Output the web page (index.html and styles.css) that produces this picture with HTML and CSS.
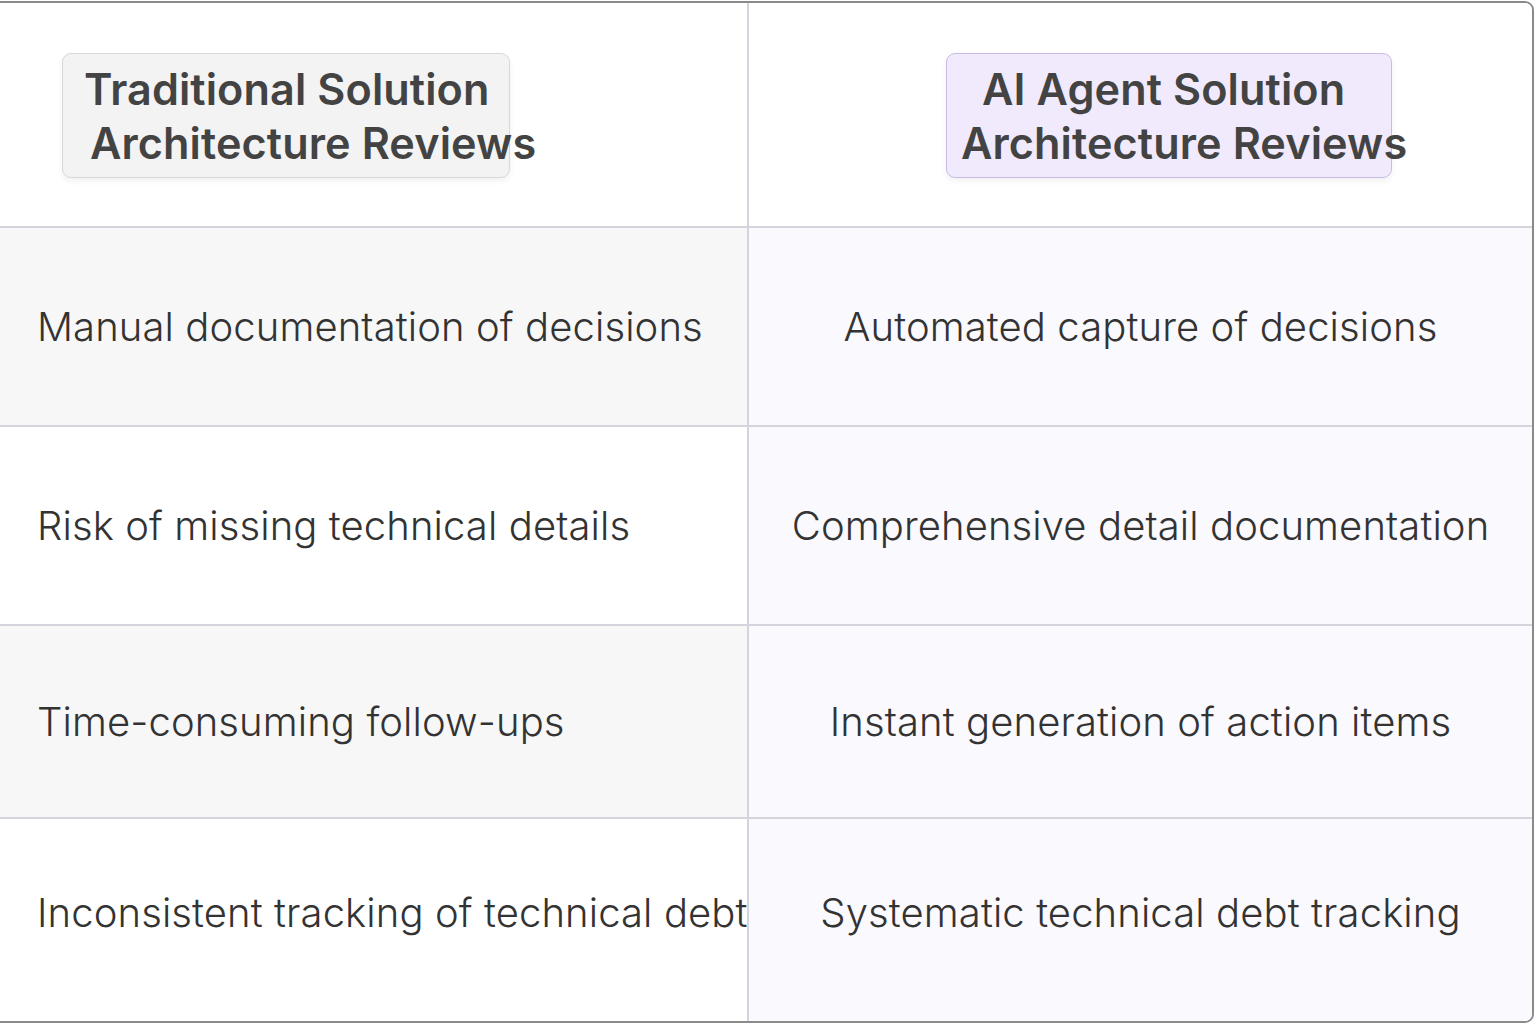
FILE: index.html
```html
<!DOCTYPE html>
<html>
<head>
<meta charset="utf-8">
<link rel="stylesheet" href="styles.css">
</head>
<body>
<div class="frame">
  <div class="row row-head">
    <div class="cell cell-left cell-head">
      <div class="badge badge-trad">
        <span class="line trad-1">Traditional Solution</span>
        <span class="line trad-2">Architecture Reviews</span>
      </div>
    </div>
    <div class="cell cell-right cell-head">
      <div class="badge badge-ai">
        <span class="line ai-1">AI Agent Solution</span>
        <span class="line ai-2">Architecture Reviews</span>
      </div>
    </div>
  </div>
  <div class="row row-1">
    <div class="cell cell-left shade">Manual documentation of decisions</div>
    <div class="cell cell-right">Automated capture of decisions</div>
  </div>
  <div class="row row-2">
    <div class="cell cell-left">Risk of missing technical details</div>
    <div class="cell cell-right">Comprehensive detail documentation</div>
  </div>
  <div class="row row-3">
    <div class="cell cell-left shade">Time-consuming follow-ups</div>
    <div class="cell cell-right">Instant generation of action items</div>
  </div>
  <div class="row row-4">
    <div class="cell cell-left">Inconsistent tracking of technical debt</div>
    <div class="cell cell-right">Systematic technical debt tracking</div>
  </div>
</div>
</body>
</html>
```

FILE: styles.css
```css
html, body {
  margin: 0;
  padding: 0;
  background: #ffffff;
  overflow: hidden;
}

body {
  font-family: Inter, "Noto Sans", "Liberation Sans", sans-serif;
  color: #333333;
}

.frame {
  margin-top: 1px;
  margin-left: -12px;
  width: 1546px;
  box-sizing: border-box;
  border: 2px solid #8a8a8a;
  border-radius: 9px;
  overflow: hidden;
  display: flex;
  flex-direction: column;
}

.row {
  display: grid;
  grid-template-columns: 759px 1fr;
  border-bottom: 2px solid #d4d4dc;
}

.row-4 { border-bottom: none; }

.row-head { height: 223px; }
.row-1 { height: 197px; }
.row-2 { height: 197px; }
.row-3 { height: 191px; }
.row-4 { height: 202px; }

.cell {
  display: flex;
  align-items: center;
  font-size: 40px;
  font-weight: 350;
  white-space: nowrap;
  letter-spacing: 0.1px;
}

.cell-left {
  border-right: 2px solid #d4d4dc;
  padding-left: 47px;
  background: #ffffff;
}

.cell-left.shade { background: #f7f7f8; }

.cell-right {
  justify-content: center;
  background: #faf9fd;
}

.row-4 .cell { padding-bottom: 16px; }

.cell-head {
  align-items: flex-start;
  background: #ffffff;
  padding-top: 50px;
}

.cell-head.cell-left { padding-left: 72px; }
.cell-head.cell-right { justify-content: flex-start; padding-left: 197px; }

.badge {
  height: 125px;
  box-sizing: border-box;
  border-radius: 9px;
  display: flex;
  flex-direction: column;
  justify-content: center;
  font-size: 43.2px;
  font-weight: 580;
  color: #434343;
  line-height: 54px;
  box-shadow: 0 3px 6px rgba(0, 0, 0, 0.06);
}

.badge-trad {
  width: 448px;
  background: #f3f3f4;
  border: 1.5px solid #d7d7dc;
}

.badge-ai {
  width: 446px;
  background: #f0eafc;
  border: 1.5px solid #c8bbe9;
}

.line { display: block; }

.trad-1 { padding-left: 21px; }
.trad-2 { padding-left: 27px; }
.ai-1 { padding-left: 35px; }
.ai-2 { padding-left: 14px; }
```
